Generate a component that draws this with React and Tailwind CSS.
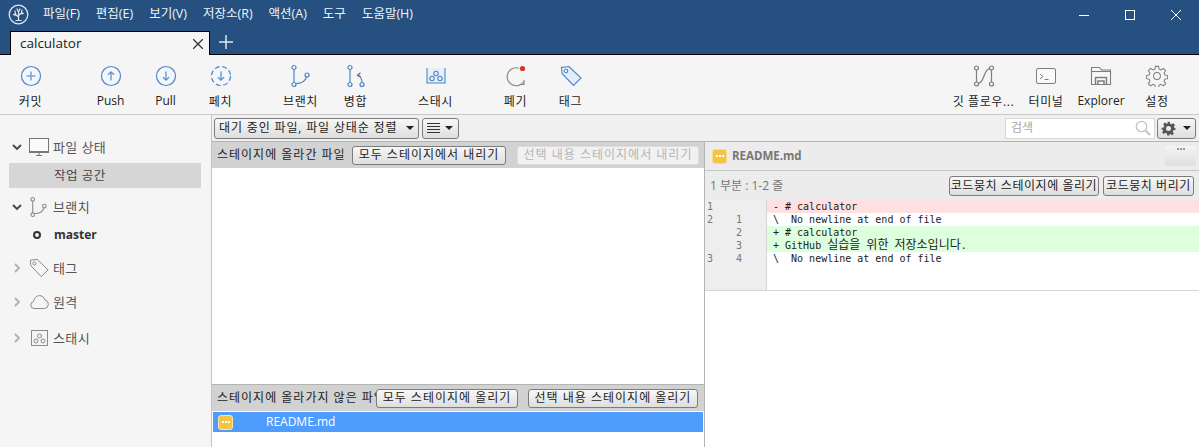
const B = "#4d85c4";

function CircleIcon({ dashed, children }) {
  return (
    <svg width="22" height="22" viewBox="0 0 22 22" fill="none">
      <circle cx="11" cy="11" r="9.500" stroke={B} strokeWidth="1.200" fill="#f3f7fc" strokeDasharray={dashed ? "5 2.600" : undefined} />
      {children}
    </svg>
  );
}
const Plus = () => <CircleIcon><path d="M11 6.500v9M6.500 11h9" stroke="#7ea8d8" strokeWidth="1.600" /></CircleIcon>;
const Up = () => <CircleIcon><path d="M11 15.500V7M8 9.800 11 6.800l3 3" stroke="#5f93cf" strokeWidth="1.300" /></CircleIcon>;
const Down = ({ dashed }) => <CircleIcon dashed={dashed}><path d="M11 6.500V15M8 12.200l3 3 3-3" stroke="#5f93cf" strokeWidth="1.300" /></CircleIcon>;

const BranchIcon = ({ c = B, w = 20, h = 24 }) => (
  <svg width={w} height={h} viewBox="0 0 20 24" fill="none" stroke={c} strokeWidth="1.200">
    <circle cx="3" cy="3.500" r="2" />
    <circle cx="3" cy="20.500" r="2" />
    <circle cx="16" cy="11" r="2" />
    <path d="M3 5.500v13M4.500 19.500c6 0 10-2.500 11-6.700" />
  </svg>
);
const MergeIcon = () => (
  <svg width="20" height="24" viewBox="0 0 20 24" fill="none" stroke={B} strokeWidth="1.200">
    <circle cx="4" cy="3.500" r="2" />
    <circle cx="4" cy="20.500" r="2" />
    <circle cx="16" cy="20.500" r="2" />
    <path d="M4 5.500v13M16 18.500c0-3-1-5.500-4-7" stroke={B} />
    <path d="M14.500 8.800 11.500 11.300l3.200 1.500" stroke="#666" />
  </svg>
);
const StashIcon = ({ c = B, fill = "#e7f0fa", w = 20, h = 18 }) => (
  <svg width={w} height={h} viewBox="0 0 20 18" fill="none" stroke={c} strokeWidth="1.100">
    <path d="M1 1v15h18V1" fill={fill} />
    <circle cx="10" cy="6.500" r="2.200" />
    <circle cx="6" cy="11.500" r="2.200" />
    <circle cx="14" cy="11.500" r="2.200" />
  </svg>
);
const SideStash = () => (
  <svg width="17" height="16" viewBox="0 0 17 16" fill="none" stroke="#8a8a8a">
    <rect x=".5" y=".5" width="16" height="15" fill="#f5f5f5" />
    <circle cx="8.500" cy="6" r="2" />
    <circle cx="5" cy="11" r="2" />
    <circle cx="12" cy="11" r="2" />
  </svg>
);
const DiscardIcon = () => (
  <svg width="24" height="24" viewBox="0 0 24 24" fill="none">
    <path d="M15 4.200A9 9 0 1 0 19.500 18" stroke="#8a8a8a" strokeWidth="1.200" />
    <path d="M15.500 20.500h4.500V16" stroke="#8a8a8a" strokeWidth="1.200" />
    <circle cx="18.500" cy="4.500" r="2.600" fill="#d9342b" />
  </svg>
);
const TagIcon = ({ c = B, fill = "#e2edf9", size = 22 }) => (
  <svg width={size} height={size} viewBox="0 0 22 22" fill="none" stroke={c} strokeWidth="1.100">
    <path d="M1.500 2.500 2 8.500 13.500 20.500 21 13 9 1.500z" fill={fill} />
    <circle cx="6" cy="6" r="1.700" fill="#fff" />
  </svg>
);
const FlowIcon = () => (
  <svg width="22" height="22" viewBox="0 0 22 22" fill="none" stroke="#7d7d7d" strokeWidth="1.200">
    <circle cx="3.500" cy="3" r="2" />
    <circle cx="3.500" cy="19" r="2" />
    <circle cx="18.500" cy="3" r="2" />
    <circle cx="18.500" cy="19" r="2" />
    <path d="M3.500 5v12M18.500 5v12M5 18.500C12 18 10 4 17 3.500" />
  </svg>
);
const TerminalIcon = () => (
  <svg width="22" height="18" viewBox="0 0 22 18" fill="none" stroke="#7d7d7d">
    <rect x="1.500" y="1.500" width="19" height="15" rx="1.500" fill="#fafafa" />
    <path d="M5 7l3 2.500L5 12M9.500 12.500h4" />
  </svg>
);
const FolderIcon = () => (
  <svg width="22" height="20" viewBox="0 0 22 20" fill="none" stroke="#7d7d7d" strokeWidth="1.100">
    <path d="M1.500 18.500V1.500h8l2 2.500h9v14.500z" fill="#f8f8f8" />
    <path d="M1.500 5.500h19" />
    <path d="M5.500 18.500v-7h11v7M8 18.500V15h6v3.500" strokeWidth="1.500" />
  </svg>
);
const GearOutline = () => (
  <svg width="22" height="22" viewBox="0 0 24 24" fill="none" stroke="#7d7d7d" strokeWidth="1.100">
    <circle cx="12" cy="12" r="3.700" />
    <path d="M10.300 1.500h3.400l.6 3.100 2 .9 2.700-1.700 2.400 2.400-1.700 2.700.9 2 3 .7v3.300l-3 .7-.9 2 1.700 2.700-2.400 2.400-2.700-1.700-2 .9-.6 3h-3.400l-.6-3-2-.9-2.700 1.700-2.400-2.400 1.700-2.700-.9-2-3-.7v-3.300l3-.7.9-2-1.700-2.700 2.400-2.400 2.700 1.700 2-.9z" />
  </svg>
);
const GearSolid = () => (
  <svg width="15" height="15" viewBox="0 0 24 24" fill="#555">
    <path fillRule="evenodd" d="M10 1h4l.6 3.200 2.200 1 2.800-1.800 2.800 2.800-1.800 2.800 1 2.200L23 10.800v3.400l-3.200.6-1 2.200 1.800 2.800-2.800 2.800-2.800-1.800-2.200 1L14 23h-4l-.6-3.200-2.200-1-2.800 1.800-2.800-2.800 1.800-2.800-1-2.200L1 14.200v-3.400l3.200-.6 1-2.200-1.800-2.800 2.800-2.800 2.800 1.800 2.200-1zM12 8a4 4 0 1 0 0 8 4 4 0 0 0 0-8z" />
  </svg>
);
const Logo = () => (
  <svg width="21" height="21" viewBox="0 0 21 21" fill="none" stroke="#dfe7ef">
    <circle cx="10.500" cy="10.500" r="9.300" strokeWidth="1.300" />
    <path d="M10.500 16.500V6.500M10.500 13 6.500 9.500M10.500 11.500 14.500 8M8.500 11.500 5 10.500M12.500 9.800 16 9.500M7.500 10.500 7 6.500M13.500 8.800 14 5.500M10.500 8 8.800 4.500M10.500 8l1.700-3.500M7.500 16.500h6" strokeWidth="1.200" />
  </svg>
);
const Chevron = ({ open }) => (
  <svg width="10" height="10" viewBox="0 0 10 10" fill="none" stroke={open ? "#444" : "#b0b0b0"} strokeWidth="1.800">
    <path d={open ? "M1 3l4 4 4-4" : "M3 1l4 4-4 4"} />
  </svg>
);
const Caret = () => <span className="block w-0 h-0 border-x-[4px] border-x-transparent border-t-[4px] border-t-[#222]" />;
const Modified = ({ light }) => (
  <span className={`flex items-center justify-center w-[15px] h-[15px] rounded-[3px] bg-[#f6c445] border ${light ? "border-[#fde6a8]" : "border-[#f9dc90]"}`}>
    <span className="flex gap-[1px]">
      <i className="block w-[2px] h-[2px] bg-white" />
      <i className="block w-[2px] h-[2px] bg-white" />
      <i className="block w-[2px] h-[2px] bg-white" />
    </span>
  </span>
);

function Tool({ icon, label, w = "w-[55px]", latin }) {
  return (
    <div className={`${w} flex flex-col items-center text-[#222] ${latin ? "text-[12px]" : "text-[12px] tracking-[0.6px]"}`}>
      <div className="h-[26px] flex items-center justify-center">{icon}</div>
      <div className={`${latin ? "mt-[3px]" : "mt-[4px]"} leading-[18px] whitespace-nowrap`}>{label}</div>
    </div>
  );
}

function Btn({ children, w, disabled, h = "h-[19px]", track = "tracking-[1px]" }) {
  return (
    <div
      className={`${w} ${h} ${track} shrink-0 flex items-center justify-center rounded-[3px] border text-[12px] whitespace-nowrap ${
        disabled
          ? "border-[#dcdcdc] text-[#b5b5b5] bg-[#f1f1f1]"
          : "border-[#7c7c7c] text-[#222] bg-gradient-to-b from-[#f7f7f7] to-[#dedede]"
      }`}
    >
      {children}
    </div>
  );
}

function SideHead({ open, icon, label, cls }) {
  return (
    <div className={`h-[26px] flex items-center pl-[12px] ${cls}`}>
      <span className="w-[15px] flex items-center"><Chevron open={open} /></span>
      <span className="w-[24px] flex items-center justify-center">{icon}</span>
      <span className="ml-[2px] pt-[2px] text-[13px] text-[#555] tracking-[0.4px]">{label}</span>
    </div>
  );
}

function DiffRow({ a, b, children, bg = "bg-white" }) {
  return (
    <div className="h-[13px] flex text-[10px] leading-[13px]">
      <div className="w-[61px] shrink-0 flex bg-[#eeeeee] text-[#777]">
        <span className="w-[31px] pl-[2px]">{a}</span>
        <span>{b}</span>
      </div>
      <div className="w-px shrink-0 bg-[#d6d6d6]" />
      <div className={`flex-1 pl-[6px] whitespace-pre text-[#222] ${bg}`}>{children}</div>
    </div>
  );
}

const menu = ["파일(F)", "편집(E)", "보기(V)", "저장소(R)", "액션(A)", "도구", "도움말(H)"];

export default function App() {
  return (
    <div className="w-[1199px] h-[447px] overflow-hidden flex flex-col bg-[#f5f5f5] [font-family:'Open_Sans','Noto_Sans_CJK_KR',sans-serif]">
      <div className="h-[29px] shrink-0 bg-[#25507f] flex items-center text-white">
        <div className="ml-[8px] w-[21px] h-[21px]"><Logo /></div>
        <div className="ml-[14px] flex gap-[16px] text-[12.500px] text-[#f0f4f8]">
          {menu.map((m) => <span key={m} className="whitespace-nowrap">{m}</span>)}
        </div>
        <div className="ml-auto flex items-center gap-[36px] pr-[18px]">
          <svg width="10" height="10" viewBox="0 0 10 10" stroke="#fff"><path d="M0 5.500h10" /></svg>
          <svg width="10" height="10" viewBox="0 0 10 10" fill="none" stroke="#fff"><rect x=".5" y=".5" width="9" height="9" /></svg>
          <svg width="10" height="10" viewBox="0 0 10 10" stroke="#fff"><path d="M0 0l10 10M10 0 0 10" /></svg>
        </div>
      </div>
      <div className="h-[26px] shrink-0 bg-[#25507f] border-b border-black flex items-end pl-[10px]">
        <div className="w-[200px] h-[24px] -mb-px bg-[#f5f5f5] border border-b-0 border-black flex items-center pl-[9px] pr-[6px] text-[13.500px] text-[#222]">
          calculator
          <svg className="ml-auto" width="10" height="10" viewBox="0 0 10 10" stroke="#333" strokeWidth="1.300"><path d="M0 0l10 10M10 0 0 10" /></svg>
        </div>
        <svg className="ml-[9px] mb-[5px]" width="14" height="14" viewBox="0 0 14 14" stroke="#dfe7ef" strokeWidth="1.500"><path d="M7 0v14M0 7h14" /></svg>
      </div>
      <div className="h-[60px] shrink-0 border-b border-[#c9c9c9] flex pt-[8px] pl-[3px]">
        <Tool icon={<Plus />} label="커밋" />
        <div className="w-[25px]" />
        <Tool icon={<Up />} label="Push" latin />
        <Tool icon={<Down />} label="Pull" latin />
        <Tool icon={<Down dashed />} label="페치" />
        <div className="w-[25px]" />
        <Tool icon={<BranchIcon />} label="브랜치" />
        <Tool icon={<MergeIcon />} label="병합" />
        <div className="w-[25px]" />
        <Tool icon={<StashIcon />} label="스태시" />
        <div className="w-[25px]" />
        <Tool icon={<DiscardIcon />} label="폐기" />
        <Tool icon={<TagIcon />} label="태그" />
        <div className="ml-auto flex pr-[14px]">
          <Tool icon={<FlowIcon />} label="깃 플로우..." w="w-[71px]" />
          <Tool icon={<TerminalIcon />} label="터미널" w="w-[54px]" />
          <Tool icon={<FolderIcon />} label="Explorer" w="w-[56px]" latin />
          <Tool icon={<GearOutline />} label="설정" w="w-[56px]" />
        </div>
      </div>
      <div className="flex-1 min-h-0 flex">
        <div className="w-[212px] shrink-0 border-r border-[#c4c4c4] pt-[19px]">
          <SideHead open label="파일 상태" icon={
            <svg width="20" height="18" viewBox="0 0 20 18" fill="none" stroke="#777"><rect x=".5" y=".5" width="19" height="13" fill="#fafafa" /><path d="M0 14.500h20M7 17.500h6M10 15v2" /></svg>
          } />
          <div className="mt-[3px] ml-[9px] w-[192px] h-[25px] bg-[#d6d6d6] flex items-center pl-[45px] pt-[2px] text-[12.500px] text-[#444] tracking-[0.5px]">작업 공간</div>
          <SideHead open label="브랜치" cls="mt-[6px]" icon={<BranchIcon c="#8a8a8a" w={18} h={22} />} />
          <div className="mt-[2px] h-[26px] flex items-center pl-[33px] text-[12px] font-bold text-[#333]">
            <span className="w-[8px] h-[8px] rounded-full border-[2px] border-[#333]" />
            <span className="ml-[13px]">master</span>
          </div>
          <SideHead label="태그" cls="mt-[7px]" icon={<TagIcon c="#8a8a8a" fill="#f5f5f5" size={20} />} />
          <SideHead label="원격" cls="mt-[8px]" icon={
            <svg width="19" height="14" viewBox="0 0 19 14" fill="none" stroke="#8a8a8a"><path d="M4 13.500a3.500 3.500 0 0 1-.5-6.900C4.200 3 6.500.6 9.500.6c2.800 0 4.800 2 5.400 4.400a4.300 4.300 0 0 1-.4 8.500z" /></svg>
          } />
          <SideHead label="스태시" cls="mt-[10px]" icon={<SideStash />} />
        </div>
        <div className="flex-1 min-w-0 flex flex-col">
          <div className="h-[27px] shrink-0 border-b border-[#b4b4b4] flex items-center pl-[2px] pr-[3px] bg-[#f0f0f0]">
            <div className="w-[205px] h-[21px] rounded-[3px] border border-[#7c7c7c] bg-gradient-to-b from-[#f7f7f7] to-[#dedede] flex items-center pl-[4px] pr-[4px] text-[12px] tracking-[0.85px] text-[#222] whitespace-nowrap">
              대기 중인 파일, 파일 상태순 정렬<span className="ml-auto"><Caret /></span>
            </div>
            <div className="ml-[3px] w-[37px] h-[21px] rounded-[3px] border border-[#7c7c7c] bg-gradient-to-b from-[#f7f7f7] to-[#dedede] flex items-center pl-[4px] pr-[5px]">
              <svg width="13" height="10" viewBox="0 0 13 10" stroke="#333"><path d="M0 .5h13M0 3.500h13M0 6.500h13M0 9.500h13" /></svg>
              <span className="ml-auto"><Caret /></span>
            </div>
            <div className="ml-auto w-[150px] h-[21px] bg-white border border-[#d6d6d6] flex items-center pl-[5px] pr-[3px] text-[12px] text-[#a8a8a8]">
              검색
              <svg className="ml-auto" width="16" height="16" viewBox="0 0 16 16" fill="none" stroke="#c2c2c2"><circle cx="6.500" cy="6.500" r="5.200" strokeWidth="1.300" /><path d="M10.500 10.500 15 15" strokeWidth="2" /></svg>
            </div>
            <div className="ml-[2px] w-[39px] h-[21px] rounded-[3px] border border-[#7c7c7c] bg-gradient-to-b from-[#f7f7f7] to-[#dedede] flex items-center pl-[3px] pr-[4px]">
              <GearSolid />
              <span className="ml-auto"><Caret /></span>
            </div>
          </div>
          <div className="flex-1 min-h-0 flex">
            <div className="w-[493px] shrink-0 border-r border-[#b4b4b4] flex flex-col bg-white">
              <div className="h-[26px] shrink-0 bg-[#d2d2d2] flex items-center pl-[5px] text-[12px] tracking-[1px] text-[#222]">
                <span className="w-[135px] shrink-0 whitespace-nowrap overflow-hidden">스테이지에 올라간 파일</span>
                <Btn w="w-[154px]">모두 스테이지에서 내리기</Btn>
                <span className="w-[11px] shrink-0" />
                <Btn w="w-[182px]" disabled>선택 내용 스테이지에서 내리기</Btn>
              </div>
              <div className="h-[217px] shrink-0 border-b border-[#b4b4b4]" />
              <div className="h-[26px] shrink-0 bg-[#d2d2d2] flex items-center pl-[5px] text-[12px] tracking-[1px] text-[#222]">
                <span className="w-[159px] shrink-0 whitespace-nowrap overflow-hidden">스테이지에 올라가지 않은 파일</span>
                <Btn w="w-[142px]">모두 스테이지에 올리기</Btn>
                <span className="w-[10px] shrink-0" />
                <Btn w="w-[170px]">선택 내용 스테이지에 올리기</Btn>
              </div>
              <div className="h-[20px] shrink-0 mt-px mx-px bg-[#4f9cff] flex items-center pl-[5px] text-[12px] text-white">
                <Modified light />
                <span className="ml-[33px]">README.md</span>
              </div>
            </div>
            <div className="flex-1 min-w-0 flex flex-col bg-white">
              <div className="h-[29px] shrink-0 bg-[#ececec] border-b border-[#c6c6c6] flex items-center pl-[7px] pr-[3px]">
                <Modified />
                <span className="ml-[5px] text-[11.500px] font-bold text-[#777]">README.md</span>
                <div className="ml-auto w-[31px] h-[20px] bg-gradient-to-b from-[#f4f4f4] to-[#e0e0e0] flex justify-center pt-[2px] gap-[1px]">
                  <i className="block w-[2px] h-[2px] bg-[#999]" />
                  <i className="block w-[2px] h-[2px] bg-[#999]" />
                  <i className="block w-[2px] h-[2px] bg-[#999]" />
                </div>
              </div>
              <div className="h-[29px] shrink-0 bg-[#ececec] flex items-center pl-[5px] pr-[5px] text-[12px] text-[#777]">
                1 부분 : 1-2 줄
                <div className="ml-auto flex gap-[4px]">
                  <Btn w="w-[150px]" h="h-[20px]" track="tracking-[0.55px]">코드뭉치 스테이지에 올리기</Btn>
                  <Btn w="w-[91px]" h="h-[20px]" track="tracking-[0.55px]">코드뭉치 버리기</Btn>
                </div>
              </div>
              <div className="h-[91px] overflow-hidden [font-family:'DejaVu_Sans_Mono','Noto_Sans_CJK_KR',monospace] border-b border-[#d6d6d6]">
                <DiffRow a="1" b="" bg="bg-[#ffe0e0]">- # calculator</DiffRow>
                <DiffRow a="2" b="1">\  No newline at end of file</DiffRow>
                <DiffRow a="" b="2" bg="bg-[#ddffdd]">+ # calculator</DiffRow>
                <DiffRow a="" b="3" bg="bg-[#ddffdd]">+ GitHub <span className="text-[12px]">실습을</span> <span className="text-[12px]">위한</span> <span className="text-[12px]">저장소입니다</span>.</DiffRow>
                <DiffRow a="3" b="4">\  No newline at end of file</DiffRow>
                <DiffRow a="" b=""> </DiffRow>
                <DiffRow a="" b=""> </DiffRow>
              </div>
            </div>
          </div>
        </div>
      </div>
    </div>
  );
}
